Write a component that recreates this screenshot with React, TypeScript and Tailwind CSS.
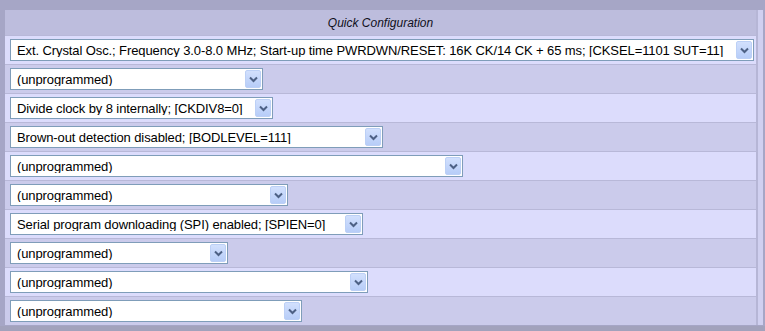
const rows: { text: string; width: number }[] = [
  {
    text: "Ext. Crystal Osc.; Frequency 3.0-8.0 MHz; Start-up time PWRDWN/RESET: 16K CK/14 CK + 65 ms; [CKSEL=1101 SUT=11]",
    width: 744,
  },
  { text: "(unprogrammed)", width: 253 },
  { text: "Divide clock by 8 internally; [CKDIV8=0]", width: 263 },
  { text: "Brown-out detection disabled; [BODLEVEL=111]", width: 373 },
  { text: "(unprogrammed)", width: 453 },
  { text: "(unprogrammed)", width: 278 },
  { text: "Serial program downloading (SPI) enabled; [SPIEN=0]", width: 353 },
  { text: "(unprogrammed)", width: 218 },
  { text: "(unprogrammed)", width: 358 },
  { text: "(unprogrammed)", width: 292 },
];

function Chevron() {
  return (
    <svg width="9" height="7" viewBox="0 0 9 7">
      <path d="M1 1.5 L4.5 5 L8 1.5" fill="none" stroke="#4d6185" strokeWidth="2" />
    </svg>
  );
}

function FakeSelect({ text, width }: { text: string; width: number }) {
  return (
    <div
      className="flex h-[22px] items-center border border-[#7f9db9] bg-white"
      style={{ width }}
    >
      <span className="flex-1 overflow-hidden whitespace-nowrap pl-[6px] text-[13px] leading-none tracking-[-0.1px] text-black">
        {text}
      </span>
      <span className="mr-[1px] flex h-[18px] w-[16px] shrink-0 items-center justify-center rounded-[2px] border border-[#bcd0f6] bg-gradient-to-b from-[#d2e0fd] to-[#b7cdf8]">
        <Chevron />
      </span>
    </div>
  );
}

export default function App() {
  return (
    <div className="h-[331px] w-[765px] overflow-hidden bg-[#a2a2bc] font-['Liberation_Sans',Arial,sans-serif]">
      <div className="h-[326px] bg-[#a6a6c6] pl-[5px] pt-[10px]">
        <div className="flex">
          <div className="w-[753px] border-r-[2px] border-[#b6b6d6]">
            <div className="h-[25px] bg-[#bdbddd] text-center text-[12px] italic leading-[26px] text-[#101020]">
              Quick Configuration
            </div>
            {rows.map((r, i) => (
              <div
                key={i}
                className={
                  "h-[29px] border-t border-[#b8b8d8] pl-[5px] pt-[3px] " +
                  (i % 2 === 0 ? "bg-[#dcdcfc]" : "bg-[#cbcbeb]")
                }
              >
                <FakeSelect text={r.text} width={r.width} />
              </div>
            ))}
          </div>
          <div className="w-[5px] bg-[#d0d0f0]" />
        </div>
      </div>
    </div>
  );
}
